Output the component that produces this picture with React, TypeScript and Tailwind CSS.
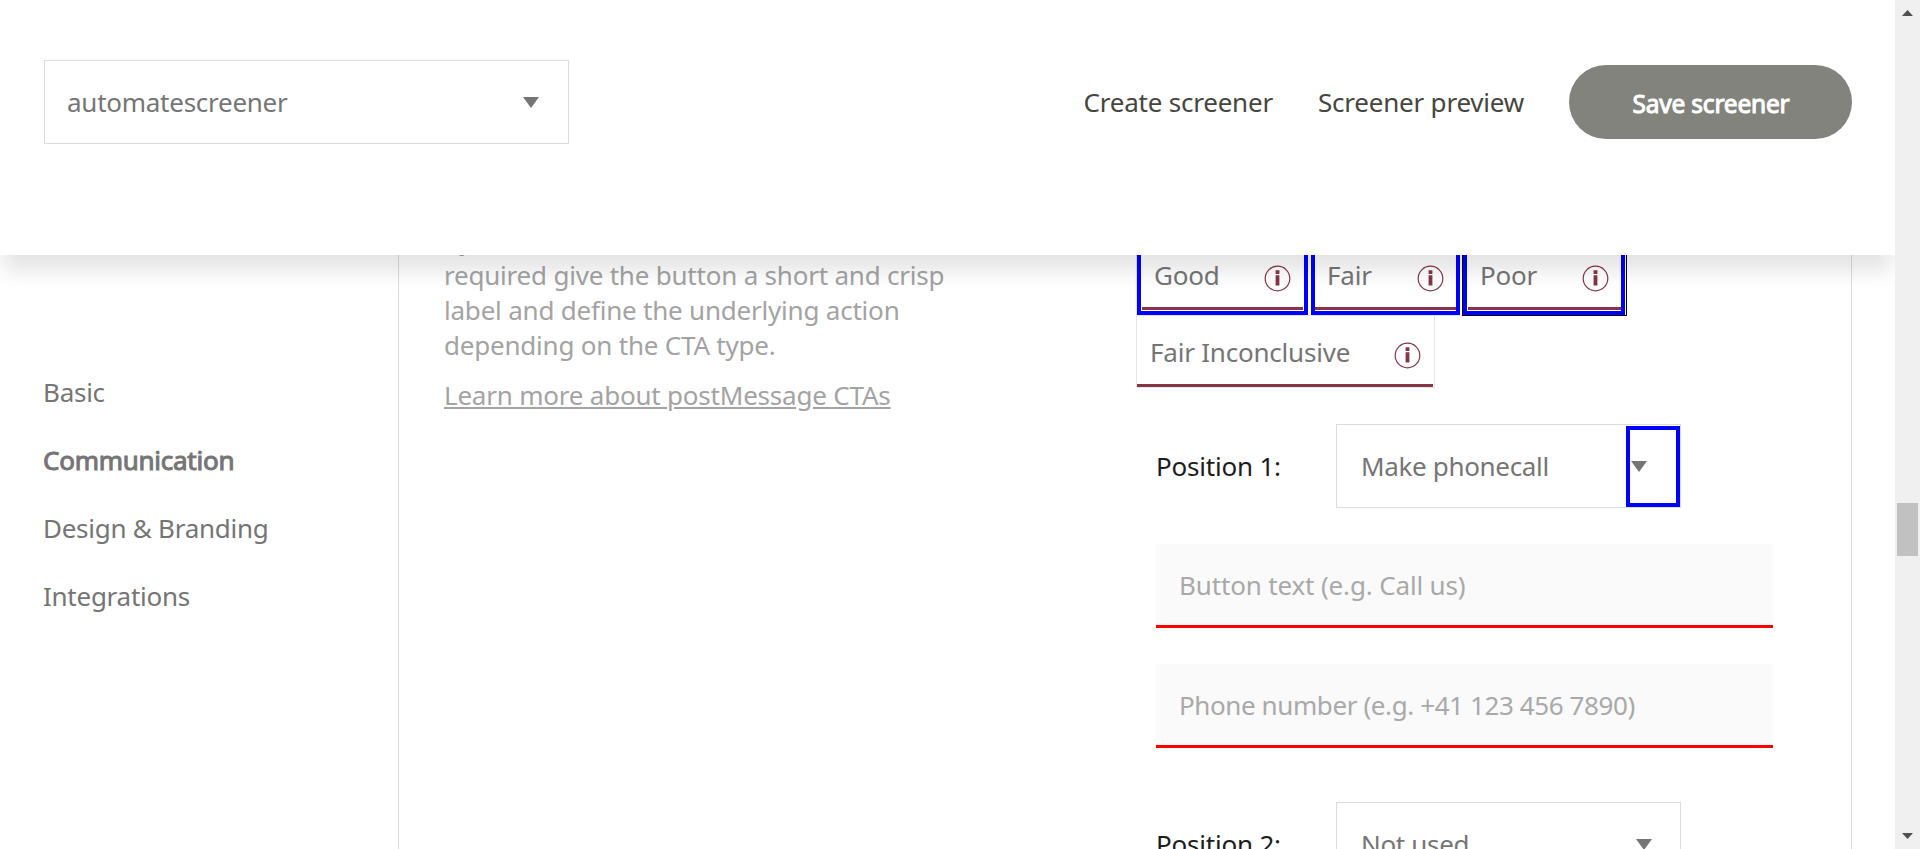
import React from "react";

function Caret({ className = "" }: { className?: string }) {
  return (
    <svg className={`shrink-0 text-[#757575] ${className}`} width="16" height="11" viewBox="0 0 16 11">
      <path d="M0 0H16L8 11Z" fill="currentColor" />
    </svg>
  );
}

function Info() {
  return (
    <svg className="mb-px shrink-0 text-[#853546]" width="27" height="27" viewBox="0 0 27 27">
      <circle cx="13.5" cy="13.5" r="12.3" fill="none" stroke="currentColor" strokeWidth="1.2" />
      <path d="M11.6 5.2h3.8v3.8h-3.8zM11.6 10.2h3.8v10.4h-3.8z" fill="currentColor" />
    </svg>
  );
}

function Select({ label, caret }: { label: string; caret?: React.ReactNode }) {
  return (
    <div className="flex h-[84px] w-[345px] items-center justify-between border border-[#dcdcdc] bg-white pl-6 text-[#757575]">
      <span className="tracking-[-0.33px]">{label}</span>
      {caret ?? <Caret className="mr-7" />}
    </div>
  );
}

function Field({ placeholder, className }: { placeholder: string; className: string }) {
  return (
    <div
      className={`flex h-[84px] w-[617px] items-center border-b-3 border-[#ff0000] bg-[#fafafa] pl-[23px] pt-0.5 text-[#a9a9a9] ${className}`}
    >
      {placeholder}
    </div>
  );
}

function Tab({ label, className, inner }: { label: string; className: string; inner: string }) {
  return (
    <div className={`h-[76px] border-4 border-t-0 border-[#0000ff] bg-white ${className}`}>
      <div className={`flex h-[71px] items-end justify-between border-b-3 border-[#853546] pb-[14px] ${inner}`}>
        <span>{label}</span>
        <Info />
      </div>
    </div>
  );
}

const nav = ["Basic", "Communication", "Design & Branding", "Integrations"];

export default function App() {
  return (
    <div className="flex h-[849px] w-[1920px] overflow-hidden bg-white font-['Noto_Sans',sans-serif] text-[26px] leading-[35px] tracking-[-0.21px]">
      <div className="flex w-[1895px] flex-col overflow-hidden">
        <header className="relative z-10 h-[255px] shrink-0 bg-white pl-11 pr-[43px] pt-[60px] shadow-[0_20px_20px_-4px_rgba(0,0,0,0.11)]">
          <div className="flex h-[84px] items-center">
            <div className="flex h-[84px] w-[525px] items-center justify-between border border-[#dcdcdc] pl-[22px] pr-[29px] text-[#757575]">
              <span className="tracking-[-0.26px]">automatescreener</span>
              <Caret />
            </div>
            <div className="ml-auto flex items-center gap-[45px] text-[#45463e]">
              <span>Create screener</span>
              <span>Screener preview</span>
              <button className="h-[74px] w-[283px] rounded-full bg-[#82837d] pl-px pt-0.5 text-[24.5px] text-white [-webkit-text-stroke:1px_white]">
                Save screener
              </button>
            </div>
          </div>
        </header>

        <div className="flex h-[594px] shrink-0">
          <nav className="flex w-[398px] flex-col gap-[33px] pl-[43px] pt-[120px] tracking-[-0.26px] text-[#757575]">
            {nav.map((n) => (
              <a key={n} className={n === "Communication" ? "[-webkit-text-stroke:1px_#757575]" : ""}>
                {n}
              </a>
            ))}
          </nav>

          <main className="flex w-[1454px] border-x border-[#dcdcdc]">
            <section className="-mt-8 w-[692px] pl-[45px] text-[#a3a3a3]">
              <p>
                by default. If
                <br />
                required give the button a short and crisp
                <br />
                label and define the underlying action
                <br />
                depending on the CTA type.
              </p>
              <a className="mt-[15px] block underline">Learn more about postMessage CTAs</a>
            </section>

            <section className="-mt-4 pl-[45px] text-[#757575]">
              <div className="flex h-[77px]">
                <div className="flex border-b border-l border-[#e3e3e3]">
                  <Tab label="Good" className="w-[171px]" inner="mx-px pl-3 pr-[12px]" />
                  <Tab label="Fair" className="ml-[3px] w-[149px]" inner="pl-3 pr-[12px]" />
                </div>
                <div className="ml-[2px] border border-t-0 border-black pr-px">
                  <Tab label="Poor" className="w-[162px]" inner="ml-px pl-3 pr-[12px]" />
                </div>
              </div>
              <div className="flex h-[72px] w-[299px] border border-t-0 border-[#e6e6e6]">
                <div className="mr-px flex flex-1 items-end justify-between border-b-3 border-[#853546] pb-[14px] pl-[13px] pr-[12px]">
                  <span>Fair Inconclusive</span>
                  <Info />
                </div>
              </div>

              <div className="mt-9 ml-5">
                <div className="flex items-center">
                  <span className="w-[180px] text-[#1c1c1c]">Position 1:</span>
                  <Select
                    label="Make phonecall"
                    caret={
                      <div className="flex h-[81px] w-[54px] items-center border-4 border-[#0000ff] pl-px">
                        <Caret />
                      </div>
                    }
                  />
                </div>
                <div className="mt-9 flex flex-col gap-9">
                  <Field placeholder="Button text (e.g. Call us)" className="tracking-[-0.15px]" />
                  <Field placeholder="Phone number (e.g. +41 123 456 7890)" className="tracking-[-0.4px]" />
                </div>
                <div className="mt-[54px] flex items-center">
                  <span className="w-[180px] text-[#1c1c1c]">Position 2:</span>
                  <Select label="Not used" />
                </div>
              </div>
            </section>
          </main>
        </div>
      </div>

      <aside className="flex w-[25px] flex-col items-center bg-[#f0f0f0] text-[#505050]">
        <svg className="mt-[10px]" width="11" height="6" viewBox="0 0 11 6">
          <path d="M0 6L5.5 0L11 6Z" fill="currentColor" />
        </svg>
        <div className="mt-[487px] h-[53px] w-[21px] bg-[#c1c1c1]" />
        <svg className="mt-[277px]" width="11" height="6" viewBox="0 0 11 6">
          <path d="M0 0L5.5 6L11 0Z" fill="currentColor" />
        </svg>
      </aside>
    </div>
  );
}
